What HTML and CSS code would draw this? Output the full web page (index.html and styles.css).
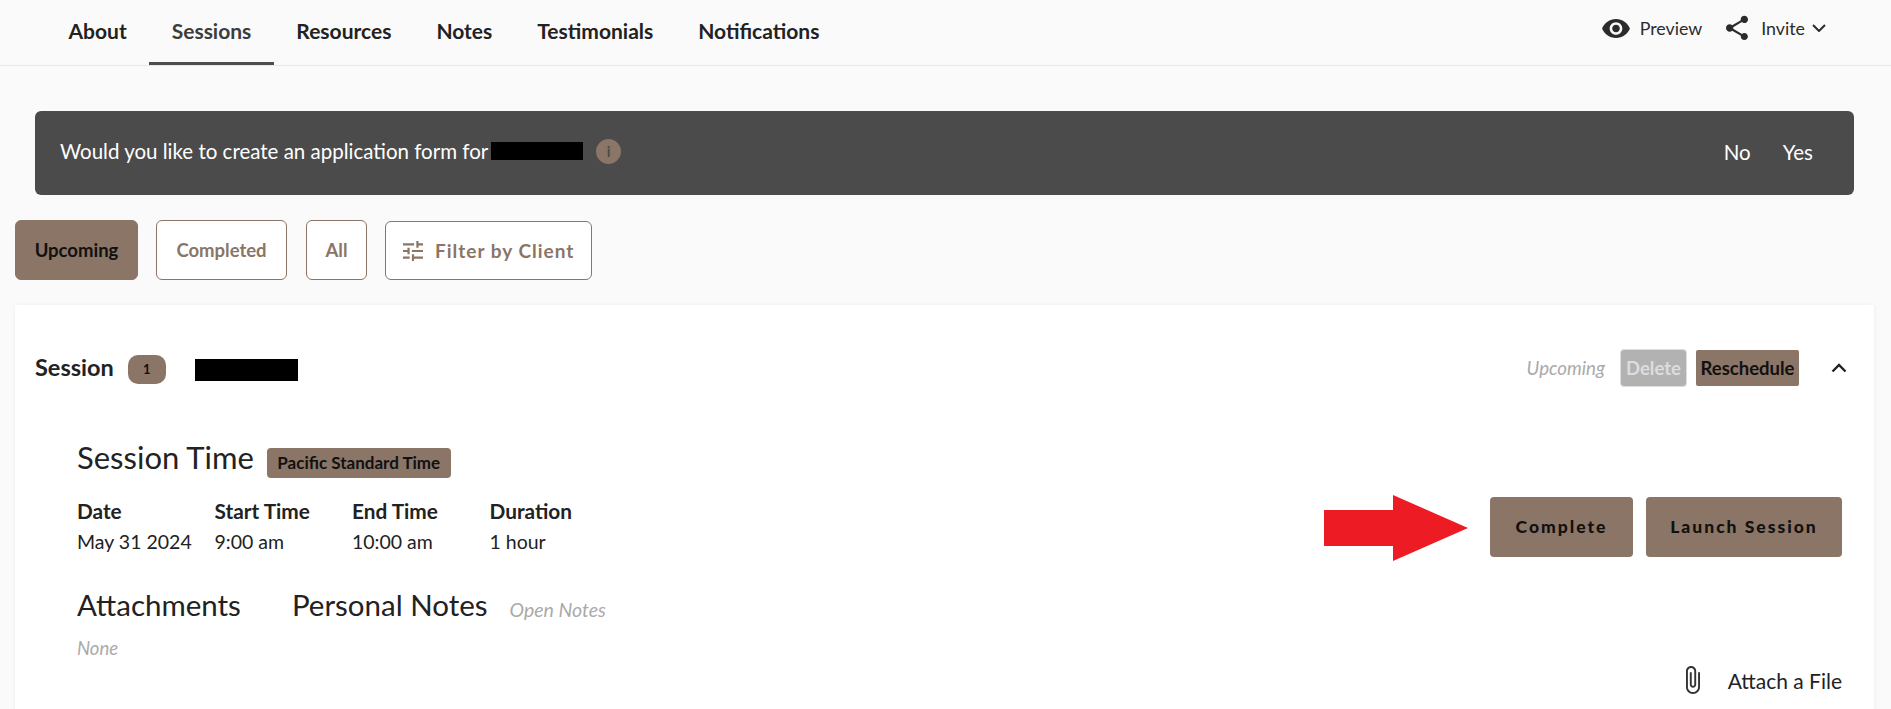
FILE: index.html
```html
<!DOCTYPE html>
<html lang="en">
<head>
    <meta charset="UTF-8">
    <title>Sessions</title>
    <link rel="stylesheet" href="styles.css">
</head>
<body>
    <div class="topbar">
        <div class="tabs">
            <a class="tab">About</a>
            <a class="tab active">Sessions</a>
            <a class="tab">Resources</a>
            <a class="tab">Notes</a>
            <a class="tab">Testimonials</a>
            <a class="tab">Notifications</a>
        </div>
        <div class="topbar-actions">
            <svg class="eye-icon" viewBox="1 4.5 22 15"><path d="M12 4.5C7 4.5 2.73 7.61 1 12c1.73 4.39 6 7.5 11 7.5s9.27-3.11 11-7.5c-1.73-4.39-6-7.5-11-7.5zM12 17c-2.76 0-5-2.24-5-5s2.24-5 5-5 5 2.24 5 5-2.24 5-5 5zm0-8c-1.66 0-3 1.34-3 3s1.34 3 3 3 3-1.34 3-3-1.34-3-3-3z"/></svg>
            <span class="preview-label">Preview</span>
            <svg class="share-icon" viewBox="3 2 18 20"><path d="M18 16.08c-.76 0-1.44.3-1.96.77L8.91 12.7c.05-.23.09-.46.09-.7s-.04-.47-.09-.7l7.05-4.11c.54.5 1.25.81 2.04.81 1.66 0 3-1.34 3-3s-1.34-3-3-3-3 1.34-3 3c0 .24.04.47.09.7L8.04 9.81C7.5 9.31 6.79 9 6 9c-1.66 0-3 1.34-3 3s1.34 3 3 3c.79 0 1.5-.31 2.04-.81l7.12 4.16c-.05.21-.08.43-.08.65 0 1.61 1.31 2.92 2.92 2.92 1.61 0 2.92-1.31 2.92-2.92s-1.31-2.92-2.92-2.92z"/></svg>
            <span class="invite-label">Invite</span>
            <svg class="caret-icon" viewBox="0 0 14 8"><path d="M1 1l6 6 6-6"/></svg>
        </div>
    </div>

    <div class="banner">
        <div class="banner-text">
            <span class="banner-question">Would you like to create an application form for</span>
            <span class="redact redact-banner"></span>
            <span class="info-icon">i</span>
        </div>
        <div class="banner-actions">
            <span>No</span>
            <span>Yes</span>
        </div>
    </div>

    <div class="filters">
        <button class="filter-btn filter-upcoming selected">Upcoming</button>
        <button class="filter-btn filter-completed">Completed</button>
        <button class="filter-btn filter-all">All</button>
        <button class="filter-btn client-btn">
            <svg class="tune-icon" viewBox="3 3 18 18"><path d="M3 17v2h6v-2H3zM3 5v2h10V5H3zm10 16v-2h8v-2h-8v-2h-2v6h2zM7 9v2H3v2h4v2h2V9H7zm14 4v-2H11v2h10zm-6-4h2V7h4V5h-4V3h-2v6z"/></svg>
            Filter by Client
        </button>
    </div>

    <div class="card">
        <div class="card-head">
            <div class="card-title">
                <span class="session-label">Session</span>
                <span class="session-num">1</span>
                <span class="redact redact-client"></span>
            </div>
            <div class="card-status">
                <span class="status-text">Upcoming</span>
                <span class="btn-delete">Delete</span>
                <span class="btn-reschedule">Reschedule</span>
                <svg class="collapse-icon" viewBox="0 0 16 10"><path d="M1.5 8.5L8 2l6.5 6.5"/></svg>
            </div>
        </div>

        <div class="card-body">
            <div class="details">
                <div class="time-head">
                    <h2>Session Time</h2>
                    <span class="tz-badge">Pacific Standard Time</span>
                </div>
                <div class="time-grid">
                    <div class="time-label">Date</div>
                    <div class="time-label">Start Time</div>
                    <div class="time-label">End Time</div>
                    <div class="time-label">Duration</div>
                    <div class="time-value">May 31 2024</div>
                    <div class="time-value">9:00 am</div>
                    <div class="time-value">10:00 am</div>
                    <div class="time-value">1 hour</div>
                </div>
                <div class="notes-head">
                    <h2>Attachments</h2>
                    <h2 class="notes-title">Personal Notes</h2>
                    <span class="open-notes">Open Notes</span>
                </div>
                <div class="none-text">None</div>
            </div>
            <div class="side">
                <div class="side-buttons">
                    <button class="action-btn btn-complete">Complete</button>
                    <button class="action-btn btn-launch">Launch Session</button>
                </div>
                <div class="attach">
                    <svg class="clip-icon" viewBox="7 1 11 22"><path d="M16.5 6v11.5c0 2.21-1.79 4-4 4s-4-1.79-4-4V5c0-1.38 1.12-2.5 2.5-2.5s2.5 1.12 2.5 2.5v10.5c0 .55-.45 1-1 1s-1-.45-1-1V6H10v9.5c0 1.38 1.12 2.5 2.5 2.5s2.5-1.12 2.5-2.5V5c0-2.21-1.79-4-4-4S7 2.79 7 5v12.5c0 3.04 2.46 5.5 5.5 5.5s5.5-2.46 5.5-5.5V6h-1.5z"/></svg>
                    <span>Attach a File</span>
                </div>
            </div>
        </div>
    </div>

    <svg class="red-arrow" viewBox="0 0 146 68"><path d="M1 16h69V1l75 33-75 33V52H1z"/></svg>
</body>
</html>
```

FILE: styles.css
```css
html, body {
    height: 100%;
}
body {
    margin: 0;
    background: #fafafa;
    font-family: 'Lato', 'Open Sans', sans-serif;
    color: #222;
    overflow: hidden;
    position: relative;
}
.topbar {
    display: flex;
    justify-content: space-between;
    height: 65px;
    border-bottom: 1px solid #e8e8e8;
    padding-left: 46px;
    padding-right: 65px;
}
.tabs {
    display: flex;
}
.tab {
    padding: 0 22.5px;
    font-size: 21px;
    font-weight: 700;
    line-height: 61px;
    height: 62px;
    color: #222;
}
.tab.active {
    color: #3d3d3d;
    border-bottom: 3px solid #4d4d4d;
}
.topbar-actions {
    display: flex;
    align-items: center;
    height: 56px;
    font-size: 17.8px;
    color: #2b2b2b;
}
.eye-icon {
    width: 28px;
    height: 19px;
    fill: #2b2b2b;
}
.preview-label {
    margin-left: 10px;
    margin-right: 24px;
}
.share-icon {
    width: 22px;
    height: 26px;
    fill: #2b2b2b;
}
.invite-label {
    margin-left: 13px;
}
.caret-icon {
    width: 14px;
    height: 8px;
    margin-left: 7px;
    fill: none;
    stroke: #2b2b2b;
    stroke-width: 2;
}
.banner {
    display: flex;
    justify-content: space-between;
    align-items: center;
    height: 84px;
    margin: 45px 37px 0 35px;
    padding: 0 41px 0 25px;
    background: #4b4b4b;
    border-radius: 6px;
    color: #fff;
    font-size: 20.5px;
}
.banner-text {
    display: flex;
    align-items: center;
    margin-top: -4px;
}
.banner-question {
    margin-top: -1px;
}
.redact {
    display: inline-block;
    background: #000;
}
.redact-banner {
    width: 92px;
    height: 18px;
    margin-left: 3px;
}
.info-icon {
    width: 25px;
    height: 25px;
    margin-left: 13px;
    border-radius: 50%;
    background: #8a7566;
    color: #4d4d4d;
    font-size: 15px;
    font-weight: 700;
    line-height: 25px;
    text-align: center;
}
.banner-actions {
    display: flex;
    gap: 32px;
    margin-top: -2px;
}
.filters {
    display: flex;
    align-items: flex-end;
    gap: 18px;
    margin: 25px 0 0 15px;
    height: 60px;
}
.filter-btn {
    height: 60px;
    padding: 0;
    background: #fff;
    border: 1px solid #8a7566;
    border-radius: 6px;
    color: #8a7566;
    font-family: inherit;
    font-size: 18.5px;
    font-weight: 700;
}
.filter-btn.selected {
    background: #8a7566;
    color: #111;
}
.filter-upcoming {
    width: 123px;
}
.filter-completed {
    width: 131px;
}
.filter-all {
    width: 61px;
    margin-left: 1px;
}
.client-btn {
    display: flex;
    align-items: center;
    height: 59px;
    font-size: 19px;
    letter-spacing: 1px;
    padding: 0 17px;
    gap: 12px;
}
.tune-icon {
    width: 20px;
    height: 20px;
    fill: #8a7566;
}
.card {
    height: 420px;
    margin: 25px 17px 0 15px;
    background: #fff;
    box-shadow: 0 0 4px rgba(0, 0, 0, 0.06);
}
.card-head {
    display: flex;
    justify-content: space-between;
    align-items: center;
    height: 38px;
    padding: 44px 27px 0 20px;
}
.card-title {
    display: flex;
    align-items: center;
}
.session-label {
    font-size: 23.5px;
    font-weight: 700;
    margin-top: -2px;
}
.session-num {
    width: 38px;
    height: 29px;
    margin-left: 14px;
    margin-top: 2px;
    border-radius: 10px;
    background: #8a7566;
    color: #111;
    font-size: 13px;
    font-weight: 700;
    line-height: 29px;
    text-align: center;
}
.redact-client {
    width: 103px;
    height: 22px;
    margin-left: 29px;
    margin-top: 4px;
}
.card-status {
    display: flex;
    align-items: center;
}
.status-text {
    color: #aaa;
    font-size: 18.7px;
    font-style: italic;
}
.btn-delete {
    margin-left: 15px;
    height: 38px;
    line-height: 36px;
    box-sizing: border-box;
    width: 67px;
    text-align: center;
    background: #b2b2b2;
    border: 1px solid #ddd;
    border-radius: 4px;
    color: #ddd;
    font-size: 18.5px;
    font-weight: 700;
}
.btn-reschedule {
    margin-left: 9px;
    width: 103px;
    height: 36px;
    line-height: 36px;
    text-align: center;
    background: #8a7566;
    border-radius: 2px;
    color: #111;
    font-size: 18.5px;
    font-weight: 700;
}
.collapse-icon {
    width: 16px;
    height: 10px;
    margin-left: 32px;
    fill: none;
    stroke: #222;
    stroke-width: 2.4;
}
.card-body {
    display: flex;
    justify-content: space-between;
    padding: 61px 32px 0 62px;
}
h2 {
    margin: 0;
    font-size: 29.5px;
    font-weight: 400;
    line-height: 36px;
}
.time-head {
    display: flex;
    align-items: center;
    height: 30px;
}
.time-head h2 {
    font-size: 31px;
    margin-bottom: 12px;
}
.tz-badge {
    margin-left: 13px;
    height: 30px;
    width: 184px;
    line-height: 30px;
    text-align: center;
    background: #8a7566;
    border-radius: 4px;
    color: #111;
    font-size: 17px;
    font-weight: 700;
}
.time-grid {
    display: grid;
    grid-template-columns: repeat(4, 137.5px);
    grid-row-gap: 7px;
    margin-top: 21px;
    line-height: 24px;
}
.time-label {
    font-size: 20.8px;
    font-weight: 700;
}
.time-value {
    font-size: 19.5px;
}
.notes-head {
    display: flex;
    align-items: center;
    margin-top: 33px;
}
.notes-title {
    margin-left: 51px;
}
.open-notes {
    margin-left: 22px;
    margin-top: 8px;
    color: #aaa;
    font-size: 19.5px;
    font-style: italic;
}
.none-text {
    margin-top: 15px;
    color: #aaa;
    font-size: 18.5px;
    font-style: italic;
    line-height: 20px;
}
.side {
    display: flex;
    flex-direction: column;
    align-items: flex-end;
    padding-top: 49px;
}
.side-buttons {
    display: flex;
    gap: 13px;
}
.action-btn {
    height: 60px;
    background: #8a7566;
    border: 0;
    border-radius: 4px;
    color: #111;
    font-family: inherit;
    font-size: 17.5px;
    font-weight: 900;
    letter-spacing: 2px;
    padding: 0 0 2px;
}
.btn-complete {
    width: 143px;
}
.btn-launch {
    width: 196px;
}
.attach {
    display: flex;
    align-items: center;
    height: 28px;
    margin-top: 109px;
    font-size: 21px;
}
.clip-icon {
    width: 16px;
    height: 28px;
    margin-right: 27px;
    fill: #333;
}
.red-arrow {
    position: absolute;
    left: 1323px;
    top: 494px;
    width: 146px;
    height: 68px;
    fill: #ed1c24;
}
```
